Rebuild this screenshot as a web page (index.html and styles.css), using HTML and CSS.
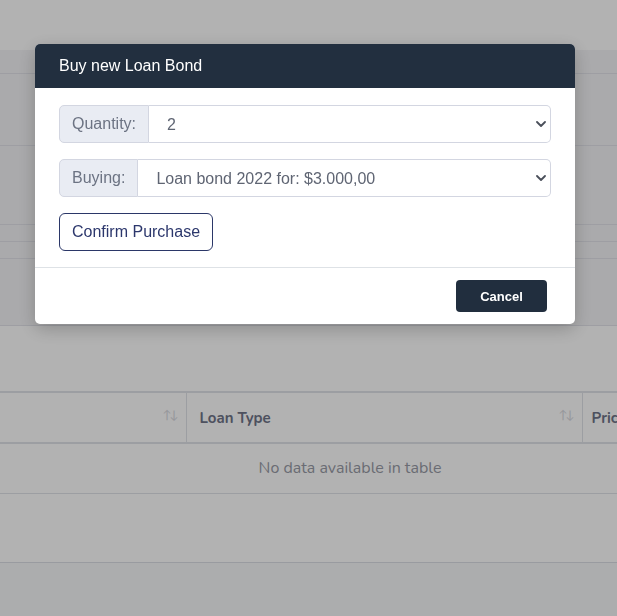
FILE: index.html
```html
<!DOCTYPE html>
<html lang="en">
<head>
<meta charset="utf-8">
<title>Buy new Loan Bond</title>
<link rel="stylesheet" href="styles.css">
</head>
<body>
<div class="page">
  <header class="navbar"></header>
  <div class="band band-1"></div>
  <div class="band band-2"></div>
  <div class="band band-3"></div>
  <div class="band band-4"></div>
  <div class="band band-5"></div>
  <div class="band band-6"></div>
  <section class="card">
    <div class="card-top"></div>
    <table class="data-table">
      <colgroup>
        <col class="col-1"><col class="col-2"><col class="col-3">
      </colgroup>
      <thead>
        <tr>
          <th><span class="sort">↑↓</span></th>
          <th>Loan Type<span class="sort">↑↓</span></th>
          <th>Price</th>
        </tr>
      </thead>
      <tbody>
        <tr><td colspan="3" class="empty">No data available in table</td></tr>
      </tbody>
    </table>
  </section>
  <div class="page-bottom"></div>
</div>

<div class="backdrop"></div>

<div class="modal">
  <div class="modal-header">
    <h5 class="modal-title">Buy new Loan Bond</h5>
  </div>
  <div class="modal-body">
    <div class="input-group">
      <span class="group-label">Quantity:</span>
      <div class="select-wrap">
        <select class="form-select">
          <option>2</option>
        </select>
        <svg class="chevron" width="10" height="6" viewBox="0 0 10 6"><path d="M1 1l4 4 4-4" fill="none" stroke="#4a4f5a" stroke-width="1.8" stroke-linecap="round" stroke-linejoin="round"/></svg>
      </div>
    </div>
    <div class="input-group">
      <span class="group-label">Buying:</span>
      <div class="select-wrap">
        <select class="form-select">
          <option>Loan bond 2022 for: $3.000,00</option>
        </select>
        <svg class="chevron" width="10" height="6" viewBox="0 0 10 6"><path d="M1 1l4 4 4-4" fill="none" stroke="#4a4f5a" stroke-width="1.8" stroke-linecap="round" stroke-linejoin="round"/></svg>
      </div>
    </div>
    <button class="btn-outline">Confirm Purchase</button>
  </div>
  <div class="modal-footer">
    <button class="btn-dark">Cancel</button>
  </div>
</div>
</body>
</html>
```
FILE: styles.css
```css
* { box-sizing: border-box; }
html, body { margin: 0; padding: 0; }
body {
  width: 617px;
  height: 616px;
  overflow: hidden;
  font-family: "Liberation Sans", Arial, sans-serif;
  background: #f7f8fa;
}
.page { width: 617px; }
.navbar { height: 50px; background: #ffffff; }
.band { background: #f4f4f6; border-bottom: 1px solid #e2e3ea; }
.band-1 { height: 24px; }
.band-2 { height: 72px; }
.band-3 { height: 79px; }
.band-4 { height: 17px; }
.band-5 { height: 17px; }
.band-6 { height: 67px; }
.card { background: #ffffff; border-bottom: 1px solid #dcdee6; overflow: hidden; }
.card-top { height: 65px; }
.data-table {
  width: 700px;
  table-layout: fixed;
  border-collapse: collapse;
  font-family: "Nunito", Lato, "Open Sans", sans-serif;
}
.col-1 { width: 186px; }
.col-2 { width: 396px; }
.col-3 { width: 118px; }
.data-table thead th {
  height: 51px;
  border-top: 2px solid #e0e2e9;
  border-bottom: 2px solid #e0e2e9;
  border-right: 1px solid #e0e2e9;
  text-align: left;
  padding: 0 13px;
  font-size: 15px;
  font-weight: 700;
  color: #6f7488;
  position: relative;
}
.data-table thead th:last-child { padding-left: 9px; }
.sort {
  position: absolute;
  right: 9px;
  top: 14px;
  font-size: 12px;
  font-weight: 400;
  letter-spacing: -2px;
  color: #d6d8de;
}
.data-table td.empty {
  height: 50px;
  text-align: center;
  font-size: 16px;
  color: #989ba6;
  border-bottom: 1px solid #e0e2e9;
}
.card::after { content: ""; display: block; height: 68px; }
.page-bottom { height: 60px; }

.backdrop {
  position: fixed;
  inset: 0;
  background: rgba(0, 0, 0, 0.3);
}

.modal {
  position: fixed;
  left: 35px;
  top: 44px;
  width: 540px;
  background: #ffffff;
  border-radius: 5px;
  box-shadow: 0 5px 18px rgba(0, 0, 0, 0.22);
  overflow: hidden;
}
.modal-header {
  height: 44px;
  background: #222f3f;
  display: flex;
  align-items: center;
  padding: 0 24px;
}
.modal-title {
  margin: 0;
  font-size: 16px;
  font-weight: 400;
  color: #ffffff;
}
.modal-body { padding: 17px 24px 16px; }
.input-group {
  display: flex;
  height: 38px;
  margin-bottom: 16px;
  font-size: 16px;
}
.group-label {
  display: flex;
  align-items: center;
  padding: 0 12px;
  background: #e9ecf3;
  border: 1px solid #d3d6e1;
  border-radius: 5px 0 0 5px;
  color: #6c7383;
}
.select-wrap { position: relative; flex: 1; display: flex; }
.form-select {
  flex: 1;
  appearance: none;
  -webkit-appearance: none;
  border: 1px solid #d3d6e1;
  border-left: none;
  border-radius: 0 5px 5px 0;
  background: #ffffff;
  padding: 0 36px 0 18px;
  font-family: "Liberation Sans", Arial, sans-serif;
  font-size: 16px;
  color: #5f6573;
  outline: none;
}
.chevron {
  position: absolute;
  right: 5px;
  top: 16px;
  pointer-events: none;
}
.btn-outline {
  height: 38px;
  padding: 0 12px;
  background: #ffffff;
  border: 1px solid #2b3768;
  border-radius: 6px;
  font-family: "Liberation Sans", Arial, sans-serif;
  font-size: 16px;
  color: #2c376c;
}
.modal-footer {
  border-top: 1px solid #dee2e6;
  padding: 12px 28px 12px;
  display: flex;
  justify-content: flex-end;
}
.btn-dark {
  width: 91px;
  height: 32px;
  background: #212e3e;
  border: none;
  border-radius: 4px;
  font-family: "Liberation Sans", Arial, sans-serif;
  font-size: 13px;
  font-weight: 700;
  color: #ffffff;
}
```
